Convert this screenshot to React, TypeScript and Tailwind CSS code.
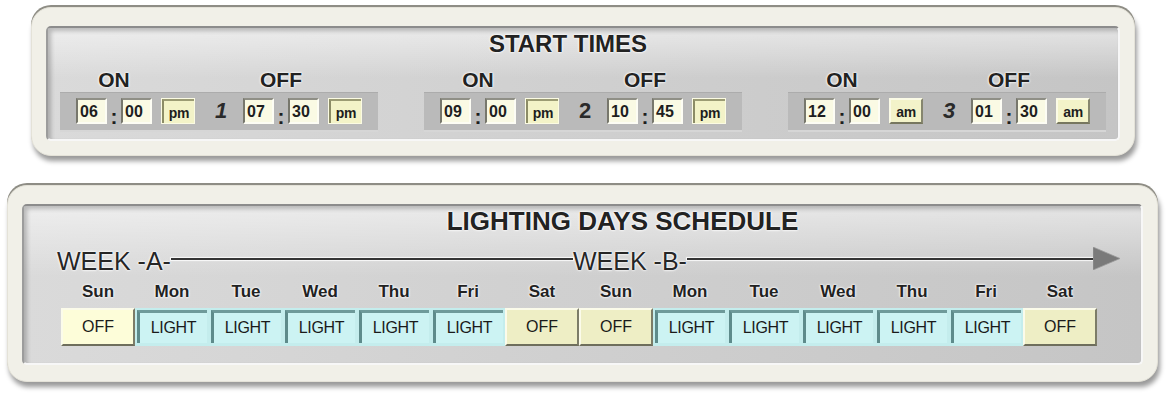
import React from "react";

const glow = "[text-shadow:0_0_2px_#ffffff,0_0_3px_#ffffff,0_0_1px_#ffffff]";

function Frame({ className, children }: { className: string; children: React.ReactNode }) {
  return (
    <div
      className={
        "rounded-[20px] bg-[#f1f0e8] border border-[#e4e2d8] shadow-[0_-2px_0_0_#8e8d85,2px_5px_5px_rgba(0,0,0,0.4)] " +
        className
      }
    >
      {children}
    </div>
  );
}

function Inner({ children }: { children: React.ReactNode }) {
  return (
    <div className="h-full rounded-[5px] border-2 border-t-[#8c8c8c] border-l-[#9c9c9c] border-r-[#f7f7f7] border-b-[#f7f7f7] shadow-[inset_3px_3px_4px_rgba(0,0,0,0.22)] bg-[linear-gradient(to_bottom,rgba(255,255,255,0.55),rgba(255,255,255,0)_45%),linear-gradient(to_right,#dadada,#c5c5c5)]">
      {children}
    </div>
  );
}

function TimeBox({ v }: { v: string }) {
  return (
    <div className="w-[31px] h-[26px] bg-[#fafae4] border-2 border-t-[#8f8f86] border-l-[#77776c] border-r-[#fdfdf4] border-b-[#fdfdf4] text-[16px] font-bold leading-none pl-[2px] pt-[1px] flex items-center text-[#1e1e1e]">
      {v}
    </div>
  );
}

function Colon() {
  return (
    <div className="w-[14px] h-[26px] flex items-end justify-center text-[21px] font-bold leading-none text-[#1e1e1e] translate-y-[3px]">
      :
    </div>
  );
}

function AmPm({ v, raised }: { v: string; raised?: boolean }) {
  if (raised) {
    return (
      <div className="w-[34px] h-[26px] bg-[#f3f3c9] border-2 border-t-[#fbfbe6] border-l-[#fbfbe6] border-r-[#86866e] border-b-[#77775f] flex items-end justify-center pb-[3px] text-[14px] font-bold leading-none text-[#1e1e1e] tracking-[-0.3px]">
        {v}
      </div>
    );
  }
  return (
    <div className="w-[34px] h-[26px] bg-[#fbfbe3] p-[1px]">
      <div className="h-full border-t-2 border-l-2 border-t-[#9c9c74] border-l-[#8c8c66] bg-[#f3f3c8] flex items-end justify-center pb-[3px] text-[14px] font-bold leading-none text-[#1e1e1e] tracking-[-0.3px]">
        {v}
      </div>
    </div>
  );
}

type G = { n: string; italic: boolean; on: [string, string]; off: [string, string]; ap: string; raised?: boolean };

const groups: G[] = [
  { n: "1", italic: true, on: ["06", "00"], off: ["07", "30"], ap: "pm" },
  { n: "2", italic: false, on: ["09", "00"], off: ["10", "45"], ap: "pm" },
  { n: "3", italic: true, on: ["12", "00"], off: ["01", "30"], ap: "am", raised: true },
];

function Group({ g }: { g: G }) {
  return (
    <div className="flex flex-col">
      <div className={"flex px-[16px] text-[21px] font-bold leading-none text-[#222] " + glow}>
        <div className="w-[76px] text-center">ON</div>
        <div className="w-[91px]" />
        <div className="w-[76px] text-center">OFF</div>
      </div>
      <div className="mt-[2px] h-[40px] w-[318px] px-[16px] pt-[5px] flex items-start bg-[#bababa] border-t border-t-[#acacac] border-b-2 border-b-[#d6d6d6]">
        <TimeBox v={g.on[0]} />
        <Colon />
        <TimeBox v={g.on[1]} />
        <div className="w-[9px]" />
        <AmPm v={g.ap} raised={g.raised} />
        <div
          className={
            "w-[48px] h-[26px] pl-[4px] flex items-center justify-center text-[22px] font-bold leading-none text-[#2a2a2a] " +
            (g.italic ? "italic" : "")
          }
        >
          {g.n}
        </div>
        <TimeBox v={g.off[0]} />
        <Colon />
        <TimeBox v={g.off[1]} />
        <div className="w-[9px]" />
        <AmPm v={g.ap} raised={g.raised} />
      </div>
    </div>
  );
}

const days = ["Sun", "Mon", "Tue", "Wed", "Thu", "Fri", "Sat", "Sun", "Mon", "Tue", "Wed", "Thu", "Fri", "Sat"];
const vals = ["OFF", "LIGHT", "LIGHT", "LIGHT", "LIGHT", "LIGHT", "OFF", "OFF", "LIGHT", "LIGHT", "LIGHT", "LIGHT", "LIGHT", "OFF"];

function Cell({ v, first }: { v: string; first: boolean }) {
  if (v === "OFF") {
    return (
      <div
        className={
          "w-[74px] h-[38px] border-2 border-t-[#fbfbea] border-l-[#fbfbea] border-r-[#7c7c68] border-b-[#6e6e5c] flex items-center justify-center text-[16px] leading-none text-[#1a1a1a] " +
          (first ? "bg-[#fdfdd9]" : "bg-[#eeeec5]")
        }
      >
        OFF
      </div>
    );
  }
  return (
    <div className="w-[74px] h-[38px] bg-[#c4eded] pt-[2px] pl-[2px] pr-[2px] pb-[3px]">
      <div className="h-full border-t-[3px] border-l-[3px] border-t-[#6e9a9a] border-l-[#5e8b8b] bg-[#ccf3f3] flex items-center justify-center text-[16px] leading-none text-[#1a1a1a] tracking-[-0.3px]">
        LIGHT
      </div>
    </div>
  );
}

function Line() {
  return <div className="flex-1 h-[2px] bg-[#353535] -translate-y-[3px] shadow-[0_0_1px_1px_rgba(255,255,255,0.85)]" />;
}

export default function App() {
  return (
    <div className="w-[1167px] h-[405px] bg-white font-['Liberation_Sans',Arial,sans-serif] text-[#222] overflow-hidden">
      <div className="pt-[7px] pl-[31px]">
        <Frame className="w-[1104px] h-[149px] pt-[18px] pb-[14px] px-[14px]">
          <Inner>
            <div className={"pt-[4px] pr-[30px] text-center text-[24px] font-bold leading-none " + glow}>START TIMES</div>
            <div className="mt-[13px] flex justify-between px-[12px]">
              {groups.map((g) => (
                <Group key={g.n} g={g} />
              ))}
            </div>
          </Inner>
        </Frame>
      </div>
      <div className="pt-[29px] pl-[7px]">
        <Frame className="w-[1151px] h-[197px] pt-[18px] pb-[16px] px-[14px]">
          <Inner>
            <div className={"pt-[2px] pl-[80px] text-center text-[26px] font-bold leading-none " + glow}>
              LIGHTING DAYS SCHEDULE
            </div>
            <div className={"mt-[15px] h-[25px] flex items-center pl-[33px] pr-[21px] text-[25px] leading-none text-[#262626] " + glow}>
              <div className="w-[516px] flex items-center">
                <span>WEEK -A-</span>
                <Line />
              </div>
              <span>WEEK -B-</span>
              <Line />
              <svg width="27" height="23" viewBox="0 0 27 23" className="-translate-y-[3px] -ml-[2px]">
                <polygon points="0,0 27,11.5 0,23" fill="#7a7a7a" stroke="#9a9a9a" strokeWidth="0.8" />
              </svg>
            </div>
            <div className={"mt-[9px] flex pl-[37px] text-[17px] font-bold leading-none text-[#222] " + glow}>
              {days.map((d, i) => (
                <div key={i} className="w-[74px] text-center">
                  {d}
                </div>
              ))}
            </div>
            <div className="mt-[8px] flex pl-[37px]">
              {vals.map((v, i) => (
                <Cell key={i} v={v} first={i === 0} />
              ))}
            </div>
          </Inner>
        </Frame>
      </div>
    </div>
  );
}
